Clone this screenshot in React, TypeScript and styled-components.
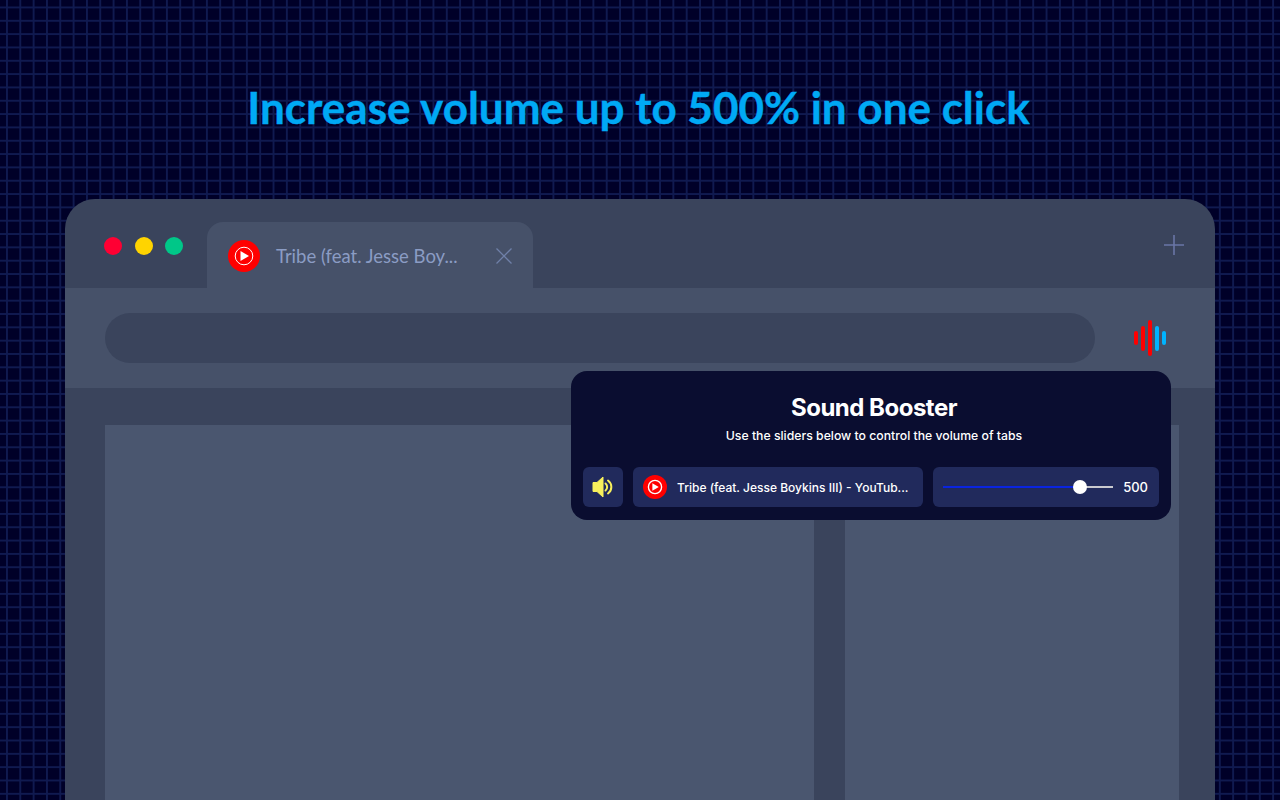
import React from "react";
import styled, { createGlobalStyle } from "styled-components";

const Global = createGlobalStyle`
  html, body { margin: 0; padding: 0; height: 100%; background: #000028; }
  #root { height: 100%; }
  * { box-sizing: border-box; }
`;

const Page = styled.div`
  width: 1280px;
  height: 800px;
  overflow: hidden;
  display: flex;
  flex-direction: column;
  align-items: center;
  background-color: #000028;
  background-image:
    linear-gradient(90deg, #101a50 2px, transparent 2px),
    linear-gradient(180deg, #101a50 2px, transparent 2px);
  background-size: 13.33px 13.33px;
  background-position: 6px 6.5px;
`;

const Heading = styled.h1`
  margin: 0;
  height: 199px;
  flex-shrink: 0;
  padding: 79px 3px 0 0;
  font-family: "Lato", sans-serif;
  font-size: 44px;
  line-height: 56px;
  font-weight: 700;
  color: #00a9f5;
  white-space: nowrap;
  -webkit-text-stroke: 0.4px #00a9f5;
`;

const Window = styled.div`
  position: relative;
  width: 1150px;
  height: 601px;
  flex-shrink: 0;
  border-radius: 30px 30px 0 0;
  background: #3a445c;
`;

const TabBar = styled.div`
  height: 89px;
  display: flex;
  align-items: flex-end;
  padding: 0 31px 0 39px;
`;

const Lights = styled.div`
  display: flex;
  align-items: center;
  height: 18px;
  align-self: flex-start;
  margin-top: 38px;
  gap: 12.5px;
  width: 103px;
`;

const Light = styled.span<{ $c: string }>`
  width: 18px;
  height: 18px;
  border-radius: 50%;
  background: ${(p) => p.$c};
`;

const Tab = styled.div`
  width: 326px;
  height: 66px;
  display: flex;
  align-items: center;
  padding: 2px 20px 0 21px;
  background: #465169;
  border-radius: 16px 16px 0 0;
`;

const TabTitle = styled.span`
  margin-left: 16px;
  flex: 1;
  font-family: "Lato", sans-serif;
  font-size: 18.5px;
  color: #8b9cc4;
  white-space: nowrap;
`;

const NewTab = styled.div`
  margin-left: auto;
  align-self: flex-start;
  margin-top: 36px;
  display: flex;
`;

const ToolBar = styled.div`
  height: 100px;
  display: flex;
  align-items: center;
  padding: 0 49px 0 40px;
  background: #465169;
`;

const Address = styled.div`
  width: 990px;
  height: 50px;
  border-radius: 25px;
  background: #3a445c;
`;

const Wave = styled.div`
  margin-left: auto;
  display: flex;
  align-items: center;
  gap: 3.5px;
`;

const Bar = styled.span<{ $h: number; $c: string }>`
  width: 3.6px;
  height: ${(p) => p.$h}px;
  border-radius: 2px;
  background: ${(p) => p.$c};
`;

const Content = styled.div`
  display: grid;
  grid-template-columns: 709px 334px;
  gap: 31px;
  padding: 37px 36px 0 40px;
`;

const Panel = styled.div`
  height: 375px;
  background: #4a566f;
`;

const Popup = styled.div`
  position: absolute;
  left: 506px;
  top: 172px;
  width: 600px;
  height: 149px;
  padding: 23px 12px 0;
  border-radius: 16px;
  background: #0a0d30;
  display: flex;
  flex-direction: column;
  font-family: "Inter", sans-serif;
  color: #fff;
`;

const PopupHeader = styled.div`
  padding-left: 6px;
  text-align: center;
`;

const Title = styled.div`
  font-size: 24px;
  line-height: 28px;
  font-weight: 700;
  letter-spacing: -0.5px;
`;

const Subtitle = styled.div`
  margin-top: 6px;
  font-size: 12.25px;
  line-height: 16px;
  font-weight: 500;
`;

const Row = styled.div`
  margin-top: 23px;
  display: grid;
  grid-template-columns: 40px 290px 226px;
  gap: 10px;
  height: 40px;
`;

const Cell = styled.div`
  display: flex;
  align-items: center;
  border-radius: 6px;
  background: #212a5c;
`;

const MuteCell = styled(Cell)`
  justify-content: center;
`;

const TitleCell = styled(Cell)`
  padding-left: 10px;
`;

const RowTitle = styled.span`
  margin-left: 10px;
  font-size: 12px;
  font-weight: 500;
  white-space: nowrap;
`;

const SliderCell = styled(Cell)`
  padding: 0 11px 0 10px;
`;

const Track = styled.div`
  position: relative;
  width: 170px;
  height: 2.5px;
  background: #c9c9cf;
`;

const Fill = styled.div`
  height: 100%;
  background: #0a24e0;
`;

const Knob = styled.div`
  position: absolute;
  top: -6px;
  width: 14px;
  height: 14px;
  margin-left: -7px;
  border-radius: 50%;
  background: #fff;
`;

const Value = styled.span`
  margin-left: auto;
  font-size: 13px;
  font-weight: 500;
`;

const YtIcon = ({ size }: { size: number }) => (
  <svg width={size} height={size} viewBox="0 0 32 32" style={{ flexShrink: 0 }}>
    <circle cx="16" cy="16" r="16" fill="#ff0000" />
    <circle cx="16" cy="16" r="8.8" fill="none" stroke="#fff" strokeWidth={size < 30 ? 1.8 : 1} />
    <path d="M12.5 11 L21 16 L12.5 21 Z" fill="#fff" />
  </svg>
);

const Speaker = () => (
  <svg width="22" height="22" viewBox="0 0 22 22">
    <path d="M1 6.5 H5 L11 1 V21 L5 15.5 H1 Z" fill="#f8f05c" stroke="#f8f05c" strokeLinejoin="round" />
    <path d="M13.5 7.5 a4.5 4.5 0 0 1 0 7" fill="none" stroke="#f8f05c" strokeWidth="2" strokeLinecap="round" />
    <path d="M16 4.5 a8 8 0 0 1 0 13" fill="none" stroke="#f8f05c" strokeWidth="2" strokeLinecap="round" />
  </svg>
);

const Cross = () => (
  <svg width="18" height="18" viewBox="0 0 18 18" style={{ flexShrink: 0 }}>
    <path d="M1.5 1.5 L16.5 16.5 M16.5 1.5 L1.5 16.5" stroke="#6f80a8" strokeWidth="1.3" />
  </svg>
);

const Plus = () => (
  <svg width="20" height="20" viewBox="0 0 20 20">
    <path d="M0 10 H20 M10 0 V20" stroke="#6a76a6" strokeWidth="1.6" />
  </svg>
);

export default function App() {
  const pct = (137 / 170) * 100;
  return (
    <Page>
      <Global />
      <Heading>Increase volume up to 500% in one click</Heading>
      <Window>
        <TabBar>
          <Lights>
            <Light $c="#ff0033" />
            <Light $c="#ffd400" />
            <Light $c="#00c788" />
          </Lights>
          <Tab>
            <YtIcon size={32} />
            <TabTitle>Tribe (feat. Jesse Boy...</TabTitle>
            <Cross />
          </Tab>
          <NewTab>
            <Plus />
          </NewTab>
        </TabBar>
        <ToolBar>
          <Address />
          <Wave>
            <Bar $h={14} $c="#ff0000" />
            <Bar $h={25} $c="#ff0000" />
            <Bar $h={36} $c="#ff0000" />
            <Bar $h={25} $c="#00b4ff" />
            <Bar $h={14} $c="#00b4ff" />
          </Wave>
        </ToolBar>
        <Content>
          <Panel />
          <Panel />
        </Content>
        <Popup>
          <PopupHeader>
            <Title>Sound Booster</Title>
            <Subtitle>Use the sliders below to control the volume of tabs</Subtitle>
          </PopupHeader>
          <Row>
            <MuteCell>
              <Speaker />
            </MuteCell>
            <TitleCell>
              <YtIcon size={24} />
              <RowTitle>Tribe (feat. Jesse Boykins III) - YouTub...</RowTitle>
            </TitleCell>
            <SliderCell>
              <Track>
                <Fill style={{ width: `${pct}%` }} />
                <Knob style={{ left: `${pct}%` }} />
              </Track>
              <Value>500</Value>
            </SliderCell>
          </Row>
        </Popup>
      </Window>
    </Page>
  );
}
